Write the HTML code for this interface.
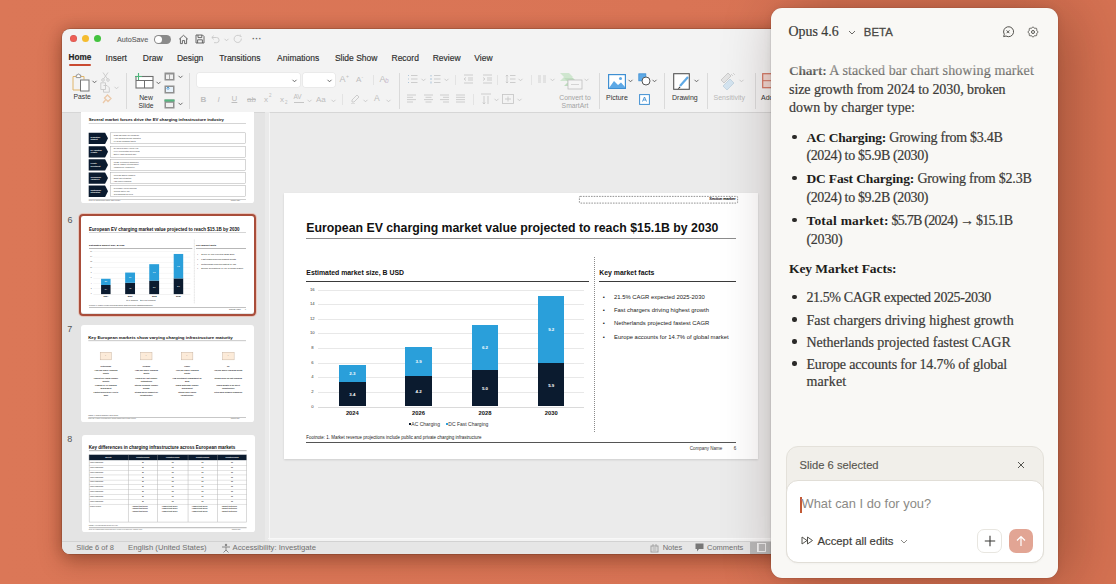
<!DOCTYPE html>
<html><head><meta charset="utf-8">
<style>
*{margin:0;padding:0;box-sizing:border-box}
html,body{width:1116px;height:584px;overflow:hidden}
body{background:#DA7556;font-family:"Liberation Sans",sans-serif;position:relative}
.a{position:absolute}
.t{position:absolute;white-space:nowrap;line-height:1}
#bg{position:absolute;left:0;top:0;width:1116px;height:584px;background:linear-gradient(90deg,#DB7757 0%,#D97455 60%,#D67252 100%)}
#win{position:absolute;left:62px;top:29px;width:760px;height:525px;background:#F3F3F3;border-radius:8px;overflow:hidden;box-shadow:0 8px 22px rgba(70,25,5,.34),0 0 14px rgba(70,25,5,.22),0 0 0 .5px rgba(0,0,0,.25)}
#panel{position:absolute;left:771px;top:7.5px;width:287px;height:570px;background:#F9F8F5;border-radius:11px;box-shadow:12px 4px 60px rgba(45,12,0,.32),0 0 8px rgba(0,0,0,.08),0 0 0 .5px rgba(0,0,0,.1);overflow:hidden}
.tab{position:absolute;top:25px;font-size:8.5px;color:#2E2E2E;-webkit-text-stroke:.15px #2E2E2E;white-space:nowrap;line-height:1}
.sep{position:absolute;width:1px;background:#DADADA}
.rl{position:absolute;font-size:7px;color:#333;white-space:nowrap;line-height:1;text-align:center}
svg{position:absolute;overflow:visible}
.g{stroke:#C6C6C6;fill:none;stroke-width:.85}
.d{stroke:#5A5A5A;fill:none;stroke-width:.9}
</style></head>
<body>
<div id="bg"></div>
<div id="win">
  <!-- ===== title bar ===== -->
  <div class="a" style="left:7.5px;top:6.3px;width:7px;height:7px;border-radius:50%;background:#EE5E55;box-shadow:inset 0 0 0 .4px rgba(0,0,0,.15)"></div>
  <div class="a" style="left:19.8px;top:6.3px;width:7px;height:7px;border-radius:50%;background:#F5BC2F"></div>
  <div class="a" style="left:32.1px;top:6.3px;width:7px;height:7px;border-radius:50%;background:#43C33F"></div>
  <div class="t" style="left:55px;top:7px;font-size:7.2px;color:#5E5E5E;-webkit-text-stroke:.1px #5E5E5E">AutoSave</div>
  <div class="a" style="left:92px;top:6px;width:17px;height:8.5px;border-radius:4.5px;background:#8A8A8A"></div>
  <div class="a" style="left:92.6px;top:6.6px;width:7.3px;height:7.3px;border-radius:50%;background:#fff"></div>
  <svg style="left:116px;top:4.5px" width="11" height="11" viewBox="0 0 11 11"><path class="d" d="M1.2 5.2 L5.5 1.3 L9.8 5.2 M2.4 4.3 V9.6 H4.4 V6.6 H6.6 V9.6 H8.6 V4.3"/></svg>
  <svg style="left:132.5px;top:5px" width="10" height="10" viewBox="0 0 10 10"><path class="d" d="M1 1 H7.5 L9 2.5 V9 H1 Z M3 1 V3.6 H6.8 V1 M2.6 9 V5.8 H7.4 V9"/></svg>
  <svg style="left:148px;top:5px" width="10" height="10" viewBox="0 0 10 10"><path class="g" d="M2 3.5 H6.5 A2.6 2.6 0 0 1 6.5 8.7 H4 M3.8 1.6 L1.8 3.5 L3.8 5.4"/></svg>
  <svg style="left:162px;top:8.5px" width="5" height="4" viewBox="0 0 5 4"><path class="g" d="M.5 .8 L2.5 2.8 L4.5 .8"/></svg>
  <svg style="left:171px;top:5px" width="10" height="10" viewBox="0 0 10 10"><path class="g" d="M8.3 4.5 A3.6 3.6 0 1 1 6.7 1.9 M7.2 .6 L7 2.2 L8.6 2.6"/></svg>
  <div class="t" style="left:190px;top:5.5px;font-size:9px;color:#666;letter-spacing:.3px;font-weight:bold">···</div>

  <!-- ===== tabs ===== -->
  <div class="tab" style="left:6.5px;font-weight:bold;color:#222;font-size:8.2px;top:25px">Home</div>
  <div class="a" style="left:6.5px;top:35px;width:22.5px;height:2px;background:#C94A31;border-radius:1px"></div>
  <div class="tab" style="left:43.6px">Insert</div>
  <div class="tab" style="left:80.8px">Draw</div>
  <div class="tab" style="left:114.9px">Design</div>
  <div class="tab" style="left:157.2px">Transitions</div>
  <div class="tab" style="left:215.1px">Animations</div>
  <div class="tab" style="left:272.9px">Slide Show</div>
  <div class="tab" style="left:329.5px">Record</div>
  <div class="tab" style="left:370.7px">Review</div>
  <div class="tab" style="left:412.3px">View</div>

  <!-- ===== ribbon ===== -->
  <div id="ribbon">
  <!-- paste -->
  <svg style="left:9.5px;top:43.5px" width="18" height="19" viewBox="0 0 18 19"><path d="M1 3.5 H4.5 M8.5 3.5 H12 V6.5" stroke="#E0B56A" fill="none" stroke-width="1"/><path d="M1 3.5 V17 H8.5" stroke="#E0B56A" fill="none" stroke-width="1"/><path d="M4.3 3.5 V2 H5.5 A1 1 0 0 1 7.5 2 H8.7 V4.6 H4.3 Z" stroke="#8A8A8A" fill="#fff" stroke-width=".9"/><rect x="8.5" y="7" width="8.5" height="11" stroke="#777" fill="#fff" stroke-width="1"/></svg>
  <svg style="left:30px;top:51px" width="5" height="4" viewBox="0 0 5 4"><path class="d" d="M.5 .8 L2.5 2.8 L4.5 .8"/></svg>
  <div class="rl" style="left:11.5px;top:65px;font-size:6.8px">Paste</div>
  <svg style="left:39px;top:43px" width="9" height="10" viewBox="0 0 9 10"><path class="g" d="M2 .5 L6.5 7 M7 .5 L2.5 7"/><circle class="g" cx="2" cy="8" r="1.3"/><circle class="g" cx="7" cy="8" r="1.3"/></svg>
  <svg style="left:37.5px;top:52.5px" width="11" height="11" viewBox="0 0 11 11"><path class="g" d="M.8 .8 H5.5 V7.5 H.8 Z M3.5 3.5 H7 L9.3 5.8 V10.2 H3.5 V7.5"/></svg>
  <svg style="left:51.5px;top:56.5px" width="5" height="4" viewBox="0 0 5 4"><path class="g" d="M.5 .8 L2.5 2.8 L4.5 .8"/></svg>
  <svg style="left:39.5px;top:65px" width="10" height="10" viewBox="0 0 10 10"><path d="M5.5 1 L9 4.5 L6 7.5 L2.5 4 Z M3.5 6 L1 9" stroke="#EBC9A9" fill="none" stroke-width="1.3"/></svg>
  <div class="sep" style="left:63.7px;top:44px;height:36px"></div>
  <!-- new slide -->
  <svg style="left:71.5px;top:44px" width="20" height="16" viewBox="0 0 20 16"><rect x="2" y="3.5" width="17" height="11.5" stroke="#6E6E6E" fill="#fff" stroke-width="1.1"/><path d="M2 7.5 H19 M10.5 7.5 V15" stroke="#6E6E6E" stroke-width="1"/><path d="M4.5 0 V7 M1 3.5 H8" stroke="#4DB57A" stroke-width="1.1"/></svg>
  <svg style="left:93.5px;top:51.5px" width="5" height="4" viewBox="0 0 5 4"><path class="d" d="M.5 .8 L2.5 2.8 L4.5 .8"/></svg>
  <div class="rl" style="left:76px;top:65px;width:16px;font-size:6.8px;line-height:7.5px">New<br>Slide</div>
  <svg style="left:101.5px;top:43px" width="11" height="9" viewBox="0 0 11 9"><rect x=".5" y=".5" width="10" height="8" fill="#909090"/><rect x="2" y="2.5" width="7" height="4.5" fill="#F0F0F0"/><path d="M5.5 2.5 V7" stroke="#909090" stroke-width=".8"/></svg>
  <svg style="left:115.5px;top:45.5px" width="5" height="4" viewBox="0 0 5 4"><path class="d" d="M.5 .8 L2.5 2.8 L4.5 .8"/></svg>
  <svg style="left:101.5px;top:56px" width="11" height="9" viewBox="0 0 11 9"><rect x=".5" y=".5" width="10" height="8" fill="#909090"/><rect x="2" y="2" width="7" height="5" fill="#E8F2FA"/><path d="M2.5 3.5 L4 2 L5.5 3.5 M4 2 V5" stroke="#3A8FD0" stroke-width=".8" fill="none"/></svg>
  <svg style="left:101.5px;top:69.5px" width="11" height="10" viewBox="0 0 11 10"><rect x=".5" y=".5" width="10" height="9" fill="#909090"/><rect x=".5" y=".5" width="10" height="2" fill="#54B67E"/><rect x="2" y="3.8" width="7" height="4.2" fill="#F0F0F0"/></svg>
  <svg style="left:115.5px;top:73px" width="5" height="4" viewBox="0 0 5 4"><path class="d" d="M.5 .8 L2.5 2.8 L4.5 .8"/></svg>
  <div class="sep" style="left:127.4px;top:44px;height:36px"></div>
  <!-- font -->
  <div class="a" style="left:135px;top:44px;width:103px;height:14px;background:#fff;border-radius:2px;box-shadow:0 0 0 .5px #E2E2E2"></div>
  <svg style="left:230px;top:49.5px" width="5" height="4" viewBox="0 0 5 4"><path class="d" d="M.5 .8 L2.5 2.8 L4.5 .8"/></svg>
  <div class="a" style="left:241px;top:44px;width:32px;height:14px;background:#fff;border-radius:2px;box-shadow:0 0 0 .5px #E2E2E2"></div>
  <svg style="left:265px;top:49.5px" width="5" height="4" viewBox="0 0 5 4"><path class="d" d="M.5 .8 L2.5 2.8 L4.5 .8"/></svg>
  <div class="t" style="left:277.5px;top:46px;font-size:9px;color:#BDBDBD">A</div><div class="t" style="left:284px;top:45px;font-size:5px;color:#BDBDBD">+</div>
  <div class="t" style="left:294px;top:47px;font-size:8px;color:#BDBDBD">A</div><div class="t" style="left:299.5px;top:45.5px;font-size:5px;color:#BDBDBD">-</div>
  <div class="sep" style="left:311px;top:46px;height:10px;background:#E3E3E3"></div>
  <div class="t" style="left:317.5px;top:46px;font-size:9px;color:#BDBDBD">A</div><div class="t" style="left:323px;top:49px;font-size:6.5px;color:#C9B9D0;font-style:italic">b</div>
  <!-- row2 font -->
  <div class="t" style="left:138.5px;top:66.5px;font-size:8px;color:#BDBDBD;font-weight:bold">B</div>
  <div class="t" style="left:155.5px;top:66.5px;font-size:8px;color:#BDBDBD;font-style:italic">I</div>
  <div class="t" style="left:169.5px;top:66px;font-size:8px;color:#BDBDBD;text-decoration:underline">U</div>
  <div class="t" style="left:185px;top:66.5px;font-size:8px;color:#BDBDBD;text-decoration:line-through">ab</div>
  <div class="t" style="left:202px;top:66.5px;font-size:8px;color:#BDBDBD">x</div><div class="t" style="left:207px;top:65px;font-size:4.5px;color:#BDBDBD">2</div>
  <div class="t" style="left:218px;top:66.5px;font-size:8px;color:#BDBDBD">x</div><div class="t" style="left:223px;top:71.5px;font-size:4.5px;color:#BDBDBD">2</div>
  <div class="t" style="left:231.5px;top:64.5px;font-size:6.5px;color:#BDBDBD">AV</div><div class="a" style="left:231.5px;top:72.5px;width:10px;height:.8px;background:#C5C5C5"></div>
  <svg style="left:245px;top:69.5px" width="5" height="4" viewBox="0 0 5 4"><path class="g" d="M.5 .8 L2.5 2.8 L4.5 .8"/></svg>
  <div class="t" style="left:254px;top:66.5px;font-size:8px;color:#BDBDBD">Aa</div>
  <svg style="left:268.5px;top:69.5px" width="5" height="4" viewBox="0 0 5 4"><path class="g" d="M.5 .8 L2.5 2.8 L4.5 .8"/></svg>
  <div class="sep" style="left:280px;top:65px;height:11px;background:#E3E3E3"></div>
  <svg style="left:288px;top:65px" width="10" height="10" viewBox="0 0 10 10"><path class="g" d="M7 1 L9 3 L4 8 L2 8 L2 6 Z"/><path d="M1 9.5 H5" stroke="#DDD" stroke-width="1"/></svg>
  <svg style="left:301px;top:69.5px" width="5" height="4" viewBox="0 0 5 4"><path class="g" d="M.5 .8 L2.5 2.8 L4.5 .8"/></svg>
  <div class="t" style="left:312px;top:65px;font-size:8.5px;color:#BDBDBD">A</div>
  <svg style="left:324px;top:69.5px" width="5" height="4" viewBox="0 0 5 4"><path class="g" d="M.5 .8 L2.5 2.8 L4.5 .8"/></svg>
  <div class="sep" style="left:337px;top:44px;height:36px"></div>
  <!-- paragraph -->
  <svg style="left:345px;top:45px" width="11" height="10" viewBox="0 0 11 10"><path class="g" d="M4 1.5 H10.5 M4 5 H10.5 M4 8.5 H10.5"/><path d="M1 1.5 H2 M1 5 H2 M1 8.5 H2" stroke="#AFC6DA" stroke-width="1.1"/></svg>
  <svg style="left:359px;top:49px" width="5" height="4" viewBox="0 0 5 4"><path class="g" d="M.5 .8 L2.5 2.8 L4.5 .8"/></svg>
  <svg style="left:368px;top:45px" width="11" height="10" viewBox="0 0 11 10"><path class="g" d="M4 1.5 H10.5 M4 5 H10.5 M4 8.5 H10.5"/><path d="M1 1 V2.5 M1 4 V6 M1 7.5 V9.5" stroke="#AFC6DA" stroke-width="1.1"/></svg>
  <svg style="left:382px;top:49px" width="5" height="4" viewBox="0 0 5 4"><path class="g" d="M.5 .8 L2.5 2.8 L4.5 .8"/></svg>
  <div class="sep" style="left:393.3px;top:46px;height:10px;background:#E3E3E3"></div>
  <svg style="left:400.5px;top:45px" width="11" height="10" viewBox="0 0 11 10"><path class="g" d="M1 1 H10 M5 4 H10 M5 6 H10 M1 9 H10 M3 3.5 L1 5 L3 6.5"/></svg>
  <svg style="left:419.5px;top:45px" width="11" height="10" viewBox="0 0 11 10"><path class="g" d="M1 1 H10 M5 4 H10 M5 6 H10 M1 9 H10 M1 3.5 L3 5 L1 6.5"/></svg>
  <div class="sep" style="left:434.5px;top:46px;height:10px;background:#E3E3E3"></div>
  <svg style="left:442.5px;top:45px" width="11" height="10" viewBox="0 0 11 10"><path class="g" d="M5 1.5 H10.5 M5 5 H10.5 M5 8.5 H10.5 M2 1 V9 M.8 2.2 L2 1 L3.2 2.2 M.8 7.8 L2 9 L3.2 7.8"/></svg>
  <svg style="left:456px;top:49px" width="5" height="4" viewBox="0 0 5 4"><path class="g" d="M.5 .8 L2.5 2.8 L4.5 .8"/></svg>
  <div class="sep" style="left:468.5px;top:46px;height:10px;background:#E3E3E3"></div>
  <svg style="left:475px;top:46px" width="10" height="8" viewBox="0 0 10 8"><path d="M1 1 H4 M1 3 H4 M1 5 H4 M1 7 H4 M6 1 H9 M6 3 H9 M6 5 H9 M6 7 H9" stroke="#CFCFCF" stroke-width=".9"/></svg>
  <svg style="left:488px;top:49px" width="5" height="4" viewBox="0 0 5 4"><path class="g" d="M.5 .8 L2.5 2.8 L4.5 .8"/></svg>
  <svg style="left:497px;top:43px" width="24" height="18" viewBox="0 0 24 18"><path d="M1 1 H10 L14 5 L10 9 H1 L5 5 Z" fill="#CFE6CF"/><path d="M5 6 H14 L18 10 L14 14 H5 L9 10 Z" fill="#BFDDBF"/><rect x="9" y="8" width="14" height="9" fill="#F5F5F5" stroke="#BDBDBD" stroke-width=".8"/><path d="M12 12.5 H20" stroke="#CCC" stroke-width=".8"/></svg>
  <svg style="left:521.5px;top:49px" width="5" height="4" viewBox="0 0 5 4"><path class="g" d="M.5 .8 L2.5 2.8 L4.5 .8"/></svg>
  <div class="rl" style="left:494px;top:65px;width:38px;font-size:6.8px;line-height:7.8px;color:#A3A3A3">Convert to<br>SmartArt</div>
  <!-- row2 para -->
  <svg style="left:344px;top:65px" width="11" height="9" viewBox="0 0 11 9"><path class="g" d="M1 1 H10 M1 3.3 H7 M1 5.6 H10 M1 8 H7"/></svg>
  <svg style="left:361px;top:65px" width="11" height="9" viewBox="0 0 11 9"><path class="g" d="M1 1 H10 M2.5 3.3 H8.5 M1 5.6 H10 M2.5 8 H8.5"/></svg>
  <svg style="left:377px;top:65px" width="11" height="9" viewBox="0 0 11 9"><path class="g" d="M1 1 H10 M4 3.3 H10 M1 5.6 H10 M4 8 H10"/></svg>
  <svg style="left:393px;top:65px" width="11" height="9" viewBox="0 0 11 9"><path class="g" d="M1 1 H10 M1 3.3 H10 M1 5.6 H10 M1 8 H10"/></svg>
  <div class="sep" style="left:411px;top:65px;height:11px;background:#E3E3E3"></div>
  <svg style="left:418px;top:64px" width="12" height="12" viewBox="0 0 12 12"><path class="g" d="M1 1 H11 M4 3 V11 M8 3 V11 M2.8 9.5 L4 11 L5.2 9.5"/></svg>
  <svg style="left:432px;top:69px" width="5" height="4" viewBox="0 0 5 4"><path class="g" d="M.5 .8 L2.5 2.8 L4.5 .8"/></svg>
  <svg style="left:440px;top:65px" width="12" height="10" viewBox="0 0 12 10"><rect class="g" x=".5" y=".5" width="11" height="9"/><path class="g" d="M3 5 H9 M6 2.5 V7.5"/></svg>
  <svg style="left:455px;top:69px" width="5" height="4" viewBox="0 0 5 4"><path class="g" d="M.5 .8 L2.5 2.8 L4.5 .8"/></svg>
  <div class="sep" style="left:536.6px;top:44px;height:36px"></div>
  <!-- picture / shapes -->
  <svg style="left:545.5px;top:44.5px" width="18" height="15" viewBox="0 0 18 15"><rect x=".6" y=".6" width="16.8" height="13.8" fill="#fff" stroke="#3F8FD2" stroke-width="1.2"/><path d="M1 14 L6 7 L10 11 L13 8.5 L17 13 V14 Z" fill="#5EA9E6"/><circle cx="12.5" cy="4.5" r="1.5" fill="#5EA9E6"/></svg>
  <svg style="left:566px;top:50px" width="5" height="4" viewBox="0 0 5 4"><path class="d" d="M.5 .8 L2.5 2.8 L4.5 .8"/></svg>
  <svg style="left:575.5px;top:44px" width="13" height="13" viewBox="0 0 13 13"><rect x=".8" y=".8" width="7" height="7" fill="#5EA9E6" stroke="#3F8FD2" stroke-width=".8"/><circle cx="8" cy="8" r="4" fill="#fff" stroke="#555" stroke-width="1"/></svg>
  <svg style="left:590px;top:50px" width="5" height="4" viewBox="0 0 5 4"><path class="d" d="M.5 .8 L2.5 2.8 L4.5 .8"/></svg>
  <div class="rl" style="left:544px;top:65px;font-size:7px;color:#333">Picture</div>
  <svg style="left:576.5px;top:64.5px" width="11" height="11" viewBox="0 0 11 11"><rect x=".6" y=".6" width="9.8" height="9.8" fill="#fff" stroke="#3F8FD2" stroke-width="1"/><path d="M3.5 7.5 L5.5 3 L7.5 7.5 M4.3 6 H6.7" stroke="#3F8FD2" stroke-width=".9" fill="none"/></svg>
  <div class="sep" style="left:602.2px;top:44px;height:36px"></div>
  <!-- drawing -->
  <svg style="left:611px;top:43.5px" width="18" height="18" viewBox="0 0 18 18"><rect x=".7" y=".7" width="15.6" height="15.6" fill="#fff" stroke="#555" stroke-width="1.1"/><path d="M15 4 L7 13" stroke="#5EA9E6" stroke-width="2.2"/><path d="M6.5 13.5 L4.5 16.5 L7.5 14.5 Z" fill="#333"/></svg>
  <svg style="left:632px;top:50px" width="5" height="4" viewBox="0 0 5 4"><path class="d" d="M.5 .8 L2.5 2.8 L4.5 .8"/></svg>
  <div class="rl" style="left:610px;top:65px;font-size:7px;color:#333">Drawing</div>
  <div class="sep" style="left:645px;top:44px;height:36px"></div>
  <!-- sensitivity -->
  <svg style="left:656.5px;top:43px" width="19" height="19" viewBox="0 0 19 19"><path d="M2 8 L9 1 L12 4 L5 11 Z" fill="#E4E4E4" stroke="#C4C4C4" stroke-width=".8"/><path d="M4 14 L11 7 L15 11 L8 18 Z" fill="#D4E4F0" stroke="#BFD0DD" stroke-width=".8"/><path d="M12 2 L14 4 M14 1 L16 3" stroke="#CCC" stroke-width=".8"/></svg>
  <svg style="left:677px;top:50px" width="5" height="4" viewBox="0 0 5 4"><path class="g" d="M.5 .8 L2.5 2.8 L4.5 .8"/></svg>
  <div class="rl" style="left:651.5px;top:65px;font-size:7px;color:#B9B9B9">Sensitivity</div>
  <div class="sep" style="left:692.5px;top:44px;height:36px"></div>
  <svg style="left:700px;top:44px" width="14" height="16" viewBox="0 0 14 16"><rect x=".7" y=".7" width="12" height="14" fill="#F3D9D3" stroke="#D2735F" stroke-width="1.2"/><path d="M.7 7.7 H12.7" stroke="#D2735F" stroke-width="1"/></svg>
  <div class="rl" style="left:699px;top:65px;font-size:7px;color:#333">Add-ins</div>
  </div>

  <!-- ===== slide panel ===== -->
  <div class="a" style="left:0;top:83px;width:206px;height:429px;background:#E4E4E4;border-top:.5px solid #D6D6D6"></div>
  <div class="a" style="left:203.2px;top:83px;width:4px;height:429px;background:#EAEAEA"></div>
  <!-- main area -->
  <div class="a" style="left:207.2px;top:83px;width:560px;height:426px;background:#EBEBEB;border-left:1px solid #F6F6F6;border-top:.5px solid #D6D6D6"></div>
  <div class="a" style="left:206px;top:508.5px;width:560px;height:1px;background:#F8F8F8"></div>
  <!-- status -->
  <div class="a" style="left:0;top:512px;width:760px;height:13px;background:#E6E6E6;border-top:.5px solid #D2D2D2"></div>
  <div class="t" style="left:14.3px;top:514.8px;font-size:7.5px;color:#707070">Slide 6 of 8</div>
  <div class="t" style="left:66px;top:514.8px;font-size:7.7px;color:#707070">English (United States)</div>
  <svg style="left:158.5px;top:513.5px" width="10" height="10" viewBox="0 0 10 10"><circle cx="5" cy="2" r="1.2" fill="#888"/><path d="M1 4 H9 M5 4 V7 L2.5 9.5 M5 7 L7.5 9.5" stroke="#888" stroke-width="1" fill="none"/></svg>
  <div class="t" style="left:170.6px;top:514.8px;font-size:7.7px;color:#707070">Accessibility: Investigate</div>
  <svg style="left:588px;top:513.5px" width="9" height="10" viewBox="0 0 9 10"><rect x="1" y="3" width="7" height="6" fill="none" stroke="#999" stroke-width=".9"/><path d="M2.5 5 H6.5 M2.5 7 H6.5 M3 1 V3.5 M6 1 V3.5" stroke="#999" stroke-width=".8"/></svg>
  <div class="t" style="left:600.7px;top:514.8px;font-size:7.5px;color:#707070">Notes</div>
  <svg style="left:633px;top:514px" width="9" height="9" viewBox="0 0 9 9"><path d="M.5 .5 H8.5 V6 H4 L2 8.5 V6 H.5 Z" fill="#777"/></svg>
  <div class="t" style="left:645px;top:514.8px;font-size:7.5px;color:#707070">Comments</div>
  <div class="a" style="left:688.3px;top:512.5px;width:30px;height:12.5px;background:#B8B8B8"></div>
  <svg style="left:695px;top:514px" width="9" height="9" viewBox="0 0 9 9"><rect x=".5" y=".5" width="8" height="8" fill="none" stroke="#F4F4F4" stroke-width=".9"/><path d="M1 .5 V8.5" stroke="#F4F4F4" stroke-width="1.5"/></svg>
</div>
<div class="a" style="left:62px;top:112px;width:206px;height:429px;overflow:hidden"><div class="a" style="left:18.799999999999997px;top:-6.5px;width:474px;height:266px;background:#fff;transform:scale(0.365);transform-origin:0 0;overflow:hidden;border-radius:8px"><div class="t" style="left:21px;top:31.6px;font-size:11.6px;font-weight:bold;color:#111">Several market forces drive the EV charging infrastructure industry</div><div class="a" style="left:21px;top:46.8px;width:431px;height:0.8px;background:#8C8C8C"></div><svg style="left:21px;top:73.3px" width="53" height="31" viewBox="0 0 53 31"><path d="M0 0 H45 L53 15.5 L45 31 H0 Z" fill="#0B1B2F"/></svg><div class="t" style="left:26px;top:82.8px;font-size:5.2px;color:#fff;font-weight:bold;line-height:6px">Regulatory<br>Support</div><div class="a" style="left:80.7px;top:73.3px;width:371px;height:31px;border:1.6px solid #8E8E8E;background:#fff"></div><div class="t" style="left:87px;top:78.3px;font-size:5px;color:#333">- 2035 ICE phase-out across EU</div><div class="t" style="left:87px;top:86.3px;font-size:5px;color:#333">- AFIR charging corridor mandates</div><div class="t" style="left:87px;top:94.3px;font-size:5px;color:#333">- Fit for 55 emissions targets</div><svg style="left:21px;top:109.5px" width="53" height="31" viewBox="0 0 53 31"><path d="M0 0 H45 L53 15.5 L45 31 H0 Z" fill="#0B1B2F"/></svg><div class="t" style="left:26px;top:119.0px;font-size:5.2px;color:#fff;font-weight:bold;line-height:6px">EV Adoption<br>Growth</div><div class="a" style="left:80.7px;top:109.5px;width:371px;height:31px;border:1.6px solid #8E8E8E;background:#fff"></div><div class="t" style="left:87px;top:114.5px;font-size:5px;color:#333">- EV sales up 35% year on year</div><div class="t" style="left:87px;top:122.5px;font-size:5px;color:#333">- Fleet electrification accelerating</div><div class="t" style="left:87px;top:130.5px;font-size:5px;color:#333">- Battery costs falling steadily</div><svg style="left:21px;top:145.7px" width="53" height="31" viewBox="0 0 53 31"><path d="M0 0 H45 L53 15.5 L45 31 H0 Z" fill="#0B1B2F"/></svg><div class="t" style="left:26px;top:155.2px;font-size:5.2px;color:#fff;font-weight:bold;line-height:6px">Private<br>Investment</div><div class="a" style="left:80.7px;top:145.7px;width:371px;height:31px;border:1.6px solid #8E8E8E;background:#fff"></div><div class="t" style="left:87px;top:150.7px;font-size:5px;color:#333">- €5.2B+ investment announced</div><div class="t" style="left:87px;top:158.7px;font-size:5px;color:#333">- Energy majors entering market</div><div class="t" style="left:87px;top:166.7px;font-size:5px;color:#333">- Infrastructure funds active</div><svg style="left:21px;top:181.9px" width="53" height="31" viewBox="0 0 53 31"><path d="M0 0 H45 L53 15.5 L45 31 H0 Z" fill="#0B1B2F"/></svg><div class="t" style="left:26px;top:191.4px;font-size:5.2px;color:#fff;font-weight:bold;line-height:6px">Technology<br>Advances</div><div class="a" style="left:80.7px;top:181.9px;width:371px;height:31px;border:1.6px solid #8E8E8E;background:#fff"></div><div class="t" style="left:87px;top:186.9px;font-size:5px;color:#333">- Ultra-fast 350kW chargers</div><div class="t" style="left:87px;top:194.9px;font-size:5px;color:#333">- Smart grid integration</div><div class="t" style="left:87px;top:202.9px;font-size:5px;color:#333">- V2G pilots expanding</div><svg style="left:21px;top:218.10000000000002px" width="53" height="31" viewBox="0 0 53 31"><path d="M0 0 H45 L53 15.5 L45 31 H0 Z" fill="#0B1B2F"/></svg><div class="t" style="left:26px;top:227.60000000000002px;font-size:5.2px;color:#fff;font-weight:bold;line-height:6px">Sustainable<br>Integration</div><div class="a" style="left:80.7px;top:218.10000000000002px;width:371px;height:31px;border:1.6px solid #8E8E8E;background:#fff"></div><div class="t" style="left:87px;top:223.10000000000002px;font-size:5px;color:#333">- Renewable energy sourcing</div><div class="t" style="left:87px;top:231.10000000000002px;font-size:5px;color:#333">- Circular battery use</div><div class="t" style="left:87px;top:239.10000000000002px;font-size:5px;color:#333">- Grid balancing services</div><div class="a" style="left:21px;top:255.5px;width:431px;height:0.7px;background:#777"></div><div class="t" style="left:21px;top:258px;font-size:3.5px;color:#555">Source: EV charging industry analysis; market research</div><div class="t" style="left:410px;top:258px;font-size:3.5px;color:#555">Company Name</div></div><div class="t" style="left:5.400000000000006px;top:103.9px;font-size:9px;color:#555">6</div><div class="a" style="left:19px;top:104.30000000000001px;width:474px;height:266px;background:#fff;transform:scale(0.365);transform-origin:0 0;overflow:hidden;border-radius:8px"><div class="t" style="left:22px;top:29.8px;font-size:12.3px;font-weight:bold;color:#111">European EV charging market value projected to reach $15.1B by 2030</div><div class="a" style="left:22px;top:45.2px;width:430px;height:0.7px;background:#8C8C8C"></div><div class="t" style="left:22px;top:77px;font-size:6.9px;font-weight:bold;color:#111">Estimated market size, B USD</div><div class="a" style="left:22px;top:88.5px;width:283px;height:1.1px;background:#3A3A3A"></div><div class="t" style="left:315px;top:77.5px;font-size:6.9px;font-weight:bold;color:#111">Key market facts</div><div class="a" style="left:315px;top:88.5px;width:137px;height:1.1px;background:#3A3A3A"></div><div class="a" style="left:309.6px;top:64px;width:0px;height:175px;border-left:.9px dotted #8A8A8A"></div><div class="a" style="left:34px;top:214.0px;width:266px;height:0.5px;background:#DADADA"></div><div class="t" style="left:20px;width:16px;text-align:center;top:212.0px;font-size:4.2px;color:#333">0</div><div class="a" style="left:34px;top:199.38px;width:266px;height:0.5px;background:#E8E8E8"></div><div class="t" style="left:20px;width:16px;text-align:center;top:197.38px;font-size:4.2px;color:#333">2</div><div class="a" style="left:34px;top:184.76px;width:266px;height:0.5px;background:#E8E8E8"></div><div class="t" style="left:20px;width:16px;text-align:center;top:182.76px;font-size:4.2px;color:#333">4</div><div class="a" style="left:34px;top:170.14px;width:266px;height:0.5px;background:#E8E8E8"></div><div class="t" style="left:20px;width:16px;text-align:center;top:168.14px;font-size:4.2px;color:#333">6</div><div class="a" style="left:34px;top:155.52px;width:266px;height:0.5px;background:#E8E8E8"></div><div class="t" style="left:20px;width:16px;text-align:center;top:153.52px;font-size:4.2px;color:#333">8</div><div class="a" style="left:34px;top:140.9px;width:266px;height:0.5px;background:#E8E8E8"></div><div class="t" style="left:20px;width:16px;text-align:center;top:138.9px;font-size:4.2px;color:#333">10</div><div class="a" style="left:34px;top:126.28px;width:266px;height:0.5px;background:#E8E8E8"></div><div class="t" style="left:20px;width:16px;text-align:center;top:124.28px;font-size:4.2px;color:#333">12</div><div class="a" style="left:34px;top:111.66px;width:266px;height:0.5px;background:#E8E8E8"></div><div class="t" style="left:20px;width:16px;text-align:center;top:109.66px;font-size:4.2px;color:#333">14</div><div class="a" style="left:34px;top:97.04px;width:266px;height:0.5px;background:#E8E8E8"></div><div class="t" style="left:20px;width:16px;text-align:center;top:95.04px;font-size:4.2px;color:#333">16</div><div class="a" style="left:54.8px;top:189.15px;width:26.5px;height:24.85px;background:#0B1B2F"></div><div class="a" style="left:54.8px;top:172.33px;width:26.5px;height:16.81px;background:#2A9FDA"></div><div class="t" style="left:54.8px;width:26.5px;text-align:center;top:200.27px;font-size:4.4px;font-weight:bold;color:#fff">3.4</div><div class="t" style="left:54.8px;width:26.5px;text-align:center;top:179.44px;font-size:4.4px;font-weight:bold;color:#fff">2.3</div><div class="t" style="left:49.8px;width:36.5px;text-align:center;top:218.3px;font-size:5.8px;font-weight:bold;color:#111">2024</div><div class="a" style="left:121px;top:183.3px;width:26.5px;height:30.7px;background:#0B1B2F"></div><div class="a" style="left:121px;top:154.79px;width:26.5px;height:28.51px;background:#2A9FDA"></div><div class="t" style="left:121px;width:26.5px;text-align:center;top:197.35px;font-size:4.4px;font-weight:bold;color:#fff">4.2</div><div class="t" style="left:121px;width:26.5px;text-align:center;top:167.74px;font-size:4.4px;font-weight:bold;color:#fff">3.9</div><div class="t" style="left:116px;width:36.5px;text-align:center;top:218.3px;font-size:5.8px;font-weight:bold;color:#111">2026</div><div class="a" style="left:187.4px;top:177.45px;width:26.5px;height:36.55px;background:#0B1B2F"></div><div class="a" style="left:187.4px;top:132.13px;width:26.5px;height:45.32px;background:#2A9FDA"></div><div class="t" style="left:187.4px;width:26.5px;text-align:center;top:194.42px;font-size:4.4px;font-weight:bold;color:#fff">5.0</div><div class="t" style="left:187.4px;width:26.5px;text-align:center;top:153.49px;font-size:4.4px;font-weight:bold;color:#fff">6.2</div><div class="t" style="left:182.4px;width:36.5px;text-align:center;top:218.3px;font-size:5.8px;font-weight:bold;color:#111">2028</div><div class="a" style="left:253.7px;top:170.87px;width:26.5px;height:43.13px;background:#0B1B2F"></div><div class="a" style="left:253.7px;top:103.62px;width:26.5px;height:67.25px;background:#2A9FDA"></div><div class="t" style="left:253.7px;width:26.5px;text-align:center;top:191.14px;font-size:4.4px;font-weight:bold;color:#fff">5.9</div><div class="t" style="left:253.7px;width:26.5px;text-align:center;top:135.94px;font-size:4.4px;font-weight:bold;color:#fff">9.2</div><div class="t" style="left:248.7px;width:36.5px;text-align:center;top:218.3px;font-size:5.8px;font-weight:bold;color:#111">2030</div><div class="a" style="left:124.5px;top:230.3px;width:2.2px;height:2.2px;background:#0B1B2F"></div><div class="t" style="left:127px;top:229.3px;font-size:5px;color:#333">AC Charging</div><div class="a" style="left:161.5px;top:230.3px;width:2.2px;height:2.2px;background:#2A9FDA"></div><div class="t" style="left:164px;top:229.3px;font-size:5px;color:#333">DC Fast Charging</div><div class="t" style="left:22px;top:243.3px;font-size:4.45px;color:#222">Footnote: 1. Market revenue projections include public and private charging infrastructure</div><div class="a" style="left:22px;top:249.7px;width:430px;height:0.7px;background:#555"></div><div class="t" style="left:405.5px;top:254px;font-size:4.5px;color:#333">Company Name</div><div class="t" style="left:449.5px;top:254px;font-size:4.5px;color:#333">6</div><div class="t" style="left:318.5px;top:102.3px;font-size:5.9px;color:#222">•</div><div class="t" style="left:329.7px;top:102.3px;font-size:5.9px;color:#222">21.5% CAGR expected 2025-2030</div><div class="t" style="left:318.5px;top:115.55px;font-size:5.9px;color:#222">•</div><div class="t" style="left:329.7px;top:115.55px;font-size:5.9px;color:#222">Fast chargers driving highest growth</div><div class="t" style="left:318.5px;top:128.8px;font-size:5.9px;color:#222">•</div><div class="t" style="left:329.7px;top:128.8px;font-size:5.9px;color:#222">Netherlands projected fastest CAGR</div><div class="t" style="left:318.5px;top:142.05px;font-size:5.9px;color:#222">•</div><div class="t" style="left:329.7px;top:142.05px;font-size:5.9px;color:#222">Europe accounts for 14.7% of global market</div></div><div class="a" style="left:16.7px;top:102.0px;width:177.6px;height:101.8px;border:2px solid #A94D3A;border-radius:4px;box-shadow:0 0 0 1px rgba(235,165,145,.5)"></div><div class="t" style="left:5.299999999999997px;top:213.3px;font-size:9px;color:#555">7</div><div class="a" style="left:19.299999999999997px;top:213.2px;width:474px;height:266px;background:#fff;transform:scale(0.365);transform-origin:0 0;overflow:hidden;border-radius:8px"><div class="t" style="left:19.6px;top:28.8px;font-size:12px;font-weight:bold;color:#111">Key European markets show varying charging infrastructure maturity</div><div class="a" style="left:19.6px;top:42.6px;width:432px;height:0.9px;background:#666"></div><div class="a" style="left:51.7px;top:74px;width:32.8px;height:21.5px;background:#FCEBD9;border:1.3px solid #B9A89A"></div><div class="t" style="left:66.6px;top:82px;font-size:5px;color:#555">•</div><div class="t" style="left:23.099999999999994px;width:90px;text-align:center;top:111.5px;font-size:5px;color:#222;font-weight:bold">Netherlands</div><div class="a" style="left:28.099999999999994px;width:80px;text-align:center;top:121px;font-size:5.3px;line-height:8px;color:#222;font-weight:bold">>100,000 public charging points</div><div class="a" style="left:28.099999999999994px;width:80px;text-align:center;top:141px;font-size:5.3px;line-height:8px;color:#222;font-weight:bold">Highest per capita charger density</div><div class="a" style="left:28.099999999999994px;width:80px;text-align:center;top:161px;font-size:5.3px;line-height:8px;color:#222;font-weight:bold">Leading in AC charging deployment</div><div class="a" style="left:28.099999999999994px;width:80px;text-align:center;top:181px;font-size:5.3px;line-height:8px;color:#222;font-weight:bold">Fastest projected CAGR to 2030</div><div class="a" style="left:162.6px;top:74px;width:32.8px;height:21.5px;background:#FCEBD9;border:1.3px solid #B9A89A"></div><div class="t" style="left:177.5px;top:82px;font-size:5px;color:#555">•</div><div class="t" style="left:134px;width:90px;text-align:center;top:111.5px;font-size:5px;color:#222;font-weight:bold">Germany</div><div class="a" style="left:139px;width:80px;text-align:center;top:121px;font-size:5.3px;line-height:8px;color:#222;font-weight:bold">>120,000 public charging points</div><div class="a" style="left:139px;width:80px;text-align:center;top:141px;font-size:5.3px;line-height:8px;color:#222;font-weight:bold">Highest DC fast charger installations</div><div class="a" style="left:139px;width:80px;text-align:center;top:161px;font-size:5.3px;line-height:8px;color:#222;font-weight:bold">Strong corporate charger growth</div><div class="a" style="left:139px;width:80px;text-align:center;top:181px;font-size:5.3px;line-height:8px;color:#222;font-weight:bold">Strong policy support for infrastructure</div><div class="a" style="left:274.4px;top:74px;width:32.8px;height:21.5px;background:#FCEBD9;border:1.3px solid #B9A89A"></div><div class="t" style="left:289.3px;top:82px;font-size:5px;color:#555">•</div><div class="t" style="left:245.8px;width:90px;text-align:center;top:111.5px;font-size:5px;color:#222;font-weight:bold">France</div><div class="a" style="left:250.8px;width:80px;text-align:center;top:121px;font-size:5.3px;line-height:8px;color:#222;font-weight:bold">>110,000 public charging points</div><div class="a" style="left:250.8px;width:80px;text-align:center;top:141px;font-size:5.3px;line-height:8px;color:#222;font-weight:bold">€1B investment commitment by 2030</div><div class="a" style="left:250.8px;width:80px;text-align:center;top:161px;font-size:5.3px;line-height:8px;color:#222;font-weight:bold">Rapid motorway charger deployment</div><div class="a" style="left:250.8px;width:80px;text-align:center;top:181px;font-size:5.3px;line-height:8px;color:#222;font-weight:bold">Strong Paris region infrastructure</div><div class="a" style="left:386.9px;top:74px;width:32.8px;height:21.5px;background:#FCEBD9;border:1.3px solid #B9A89A"></div><div class="t" style="left:401.8px;top:82px;font-size:5px;color:#555">•</div><div class="t" style="left:358.3px;width:90px;text-align:center;top:111.5px;font-size:5px;color:#222;font-weight:bold">UK</div><div class="a" style="left:363.3px;width:80px;text-align:center;top:121px;font-size:5.3px;line-height:8px;color:#222;font-weight:bold">>60,000 public charging points</div><div class="a" style="left:363.3px;width:80px;text-align:center;top:141px;font-size:5.3px;line-height:8px;color:#222;font-weight:bold">Strong focus on fast charging</div><div class="a" style="left:363.3px;width:80px;text-align:center;top:161px;font-size:5.3px;line-height:8px;color:#222;font-weight:bold">Rapid growth in on-street infrastructure</div><div class="a" style="left:363.3px;width:80px;text-align:center;top:181px;font-size:5.3px;line-height:8px;color:#222;font-weight:bold">Ultra rapid network expansion</div><div class="t" style="left:19.6px;top:247.5px;font-size:3.6px;color:#333">Footnote: 1. Charging infrastructure data as of 2024</div><div class="a" style="left:19.6px;top:252.5px;width:432px;height:0.8px;background:#666"></div><div class="t" style="left:19.6px;top:255.6px;font-size:3.4px;color:#555">Source: EU Alternative Fuels Observatory; national charging registries; market analysis</div><div class="t" style="left:410px;top:255.6px;font-size:3.4px;color:#555">Company Name</div></div><div class="t" style="left:5.299999999999997px;top:323.3px;font-size:9px;color:#555">8</div><div class="a" style="left:19.5px;top:322.9px;width:474px;height:266px;background:#fff;transform:scale(0.365);transform-origin:0 0;overflow:hidden;border-radius:8px"><div class="t" style="left:18.5px;top:28.3px;font-size:12.4px;font-weight:bold;color:#111">Key differences in charging infrastructure across European markets</div><div class="a" style="left:18.5px;top:43.3px;width:432.5px;height:0.9px;background:#333"></div><div class="a" style="left:18.5px;top:54.2px;width:432.5px;height:15.3px;background:#0B1B2F"></div><div class="t" style="left:18.5px;width:107.6px;text-align:center;top:59.5px;font-size:4.6px;color:#fff;font-weight:bold">Markets</div><div class="t" style="left:126.1px;width:81.20000000000002px;text-align:center;top:59.5px;font-size:4.6px;color:#fff;font-weight:bold">[Country/region]</div><div class="a" style="left:126.1px;top:54.2px;width:0.6px;height:184px;background:#9A9A9A"></div><div class="t" style="left:207.3px;width:82.30000000000001px;text-align:center;top:59.5px;font-size:4.6px;color:#fff;font-weight:bold">[Country/region]</div><div class="a" style="left:207.3px;top:54.2px;width:0.6px;height:184px;background:#9A9A9A"></div><div class="t" style="left:289.6px;width:81.19999999999999px;text-align:center;top:59.5px;font-size:4.6px;color:#fff;font-weight:bold">[Country/region]</div><div class="a" style="left:289.6px;top:54.2px;width:0.6px;height:184px;background:#9A9A9A"></div><div class="t" style="left:370.8px;width:80.19999999999999px;text-align:center;top:59.5px;font-size:4.6px;color:#fff;font-weight:bold">[Country/region]</div><div class="a" style="left:370.8px;top:54.2px;width:0.6px;height:184px;background:#9A9A9A"></div><div class="a" style="left:18.5px;top:82.8px;width:432.5px;height:0.6px;background:#B5B5B5"></div><div class="t" style="left:22px;top:73.8px;font-size:4.6px;color:#222">[Insert dimension]</div><div class="t" style="left:126.1px;width:81.20000000000002px;text-align:center;top:73.8px;font-size:4.6px;color:#222;font-weight:bold">xx</div><div class="t" style="left:207.3px;width:82.30000000000001px;text-align:center;top:73.8px;font-size:4.6px;color:#222;font-weight:bold">xx</div><div class="t" style="left:289.6px;width:81.19999999999999px;text-align:center;top:73.8px;font-size:4.6px;color:#222;font-weight:bold">xx</div><div class="t" style="left:370.8px;width:80.19999999999999px;text-align:center;top:73.8px;font-size:4.6px;color:#222;font-weight:bold">xx</div><div class="a" style="left:18.5px;top:96.1px;width:432.5px;height:0.6px;background:#B5B5B5"></div><div class="t" style="left:22px;top:87.1px;font-size:4.6px;color:#222">[Insert dimension]</div><div class="t" style="left:126.1px;width:81.20000000000002px;text-align:center;top:87.1px;font-size:4.6px;color:#222;font-weight:bold">xx</div><div class="t" style="left:207.3px;width:82.30000000000001px;text-align:center;top:87.1px;font-size:4.6px;color:#222;font-weight:bold">xx</div><div class="t" style="left:289.6px;width:81.19999999999999px;text-align:center;top:87.1px;font-size:4.6px;color:#222;font-weight:bold">xx</div><div class="t" style="left:370.8px;width:80.19999999999999px;text-align:center;top:87.1px;font-size:4.6px;color:#222;font-weight:bold">xx</div><div class="a" style="left:18.5px;top:109.4px;width:432.5px;height:0.6px;background:#B5B5B5"></div><div class="t" style="left:22px;top:100.4px;font-size:4.6px;color:#222">[Insert dimension]</div><div class="t" style="left:126.1px;width:81.20000000000002px;text-align:center;top:100.4px;font-size:4.6px;color:#222;font-weight:bold">xx</div><div class="t" style="left:207.3px;width:82.30000000000001px;text-align:center;top:100.4px;font-size:4.6px;color:#222;font-weight:bold">xx</div><div class="t" style="left:289.6px;width:81.19999999999999px;text-align:center;top:100.4px;font-size:4.6px;color:#222;font-weight:bold">xx</div><div class="t" style="left:370.8px;width:80.19999999999999px;text-align:center;top:100.4px;font-size:4.6px;color:#222;font-weight:bold">xx</div><div class="a" style="left:18.5px;top:122.7px;width:432.5px;height:0.6px;background:#B5B5B5"></div><div class="t" style="left:22px;top:113.7px;font-size:4.6px;color:#222">[Insert dimension]</div><div class="t" style="left:126.1px;width:81.20000000000002px;text-align:center;top:113.7px;font-size:4.6px;color:#222;font-weight:bold">xx</div><div class="t" style="left:207.3px;width:82.30000000000001px;text-align:center;top:113.7px;font-size:4.6px;color:#222;font-weight:bold">xx</div><div class="t" style="left:289.6px;width:81.19999999999999px;text-align:center;top:113.7px;font-size:4.6px;color:#222;font-weight:bold">xx</div><div class="t" style="left:370.8px;width:80.19999999999999px;text-align:center;top:113.7px;font-size:4.6px;color:#222;font-weight:bold">xx</div><div class="a" style="left:18.5px;top:136.0px;width:432.5px;height:0.6px;background:#B5B5B5"></div><div class="t" style="left:22px;top:127.0px;font-size:4.6px;color:#222">[Insert dimension]</div><div class="t" style="left:126.1px;width:81.20000000000002px;text-align:center;top:127.0px;font-size:4.6px;color:#222;font-weight:bold">xx</div><div class="t" style="left:207.3px;width:82.30000000000001px;text-align:center;top:127.0px;font-size:4.6px;color:#222;font-weight:bold">xx</div><div class="t" style="left:289.6px;width:81.19999999999999px;text-align:center;top:127.0px;font-size:4.6px;color:#222;font-weight:bold">xx</div><div class="t" style="left:370.8px;width:80.19999999999999px;text-align:center;top:127.0px;font-size:4.6px;color:#222;font-weight:bold">xx</div><div class="a" style="left:18.5px;top:149.3px;width:432.5px;height:0.6px;background:#B5B5B5"></div><div class="t" style="left:22px;top:140.3px;font-size:4.6px;color:#222">[Insert dimension]</div><div class="t" style="left:126.1px;width:81.20000000000002px;text-align:center;top:140.3px;font-size:4.6px;color:#222;font-weight:bold">xx</div><div class="t" style="left:207.3px;width:82.30000000000001px;text-align:center;top:140.3px;font-size:4.6px;color:#222;font-weight:bold">xx</div><div class="t" style="left:289.6px;width:81.19999999999999px;text-align:center;top:140.3px;font-size:4.6px;color:#222;font-weight:bold">xx</div><div class="t" style="left:370.8px;width:80.19999999999999px;text-align:center;top:140.3px;font-size:4.6px;color:#222;font-weight:bold">xx</div><div class="a" style="left:18.5px;top:162.6px;width:432.5px;height:0.6px;background:#B5B5B5"></div><div class="t" style="left:22px;top:153.6px;font-size:4.6px;color:#222">[Insert dimension]</div><div class="t" style="left:126.1px;width:81.20000000000002px;text-align:center;top:153.6px;font-size:4.6px;color:#222;font-weight:bold">xx</div><div class="t" style="left:207.3px;width:82.30000000000001px;text-align:center;top:153.6px;font-size:4.6px;color:#222;font-weight:bold">xx</div><div class="t" style="left:289.6px;width:81.19999999999999px;text-align:center;top:153.6px;font-size:4.6px;color:#222;font-weight:bold">xx</div><div class="t" style="left:370.8px;width:80.19999999999999px;text-align:center;top:153.6px;font-size:4.6px;color:#222;font-weight:bold">xx</div><div class="a" style="left:18.5px;top:175.9px;width:432.5px;height:0.6px;background:#B5B5B5"></div><div class="t" style="left:22px;top:166.9px;font-size:4.6px;color:#222">[Insert dimension]</div><div class="t" style="left:126.1px;width:81.20000000000002px;text-align:center;top:166.9px;font-size:4.6px;color:#222;font-weight:bold">xx</div><div class="t" style="left:207.3px;width:82.30000000000001px;text-align:center;top:166.9px;font-size:4.6px;color:#222;font-weight:bold">xx</div><div class="t" style="left:289.6px;width:81.19999999999999px;text-align:center;top:166.9px;font-size:4.6px;color:#222;font-weight:bold">xx</div><div class="t" style="left:370.8px;width:80.19999999999999px;text-align:center;top:166.9px;font-size:4.6px;color:#222;font-weight:bold">xx</div><div class="a" style="left:18.5px;top:189.2px;width:432.5px;height:0.6px;background:#B5B5B5"></div><div class="t" style="left:22px;top:180.2px;font-size:4.6px;color:#222">[Insert dimension]</div><div class="t" style="left:126.1px;width:81.20000000000002px;text-align:center;top:180.2px;font-size:4.6px;color:#222;font-weight:bold">xx</div><div class="t" style="left:207.3px;width:82.30000000000001px;text-align:center;top:180.2px;font-size:4.6px;color:#222;font-weight:bold">xx</div><div class="t" style="left:289.6px;width:81.19999999999999px;text-align:center;top:180.2px;font-size:4.6px;color:#222;font-weight:bold">xx</div><div class="t" style="left:370.8px;width:80.19999999999999px;text-align:center;top:180.2px;font-size:4.6px;color:#222;font-weight:bold">xx</div><div class="a" style="left:18.5px;top:54.2px;width:0.6px;height:184px;background:#9A9A9A"></div><div class="a" style="left:450.5px;top:54.2px;width:0.6px;height:184px;background:#9A9A9A"></div><div class="a" style="left:18.5px;top:238px;width:432.5px;height:0.6px;background:#9A9A9A"></div><div class="t" style="left:22px;top:194px;font-size:4.6px;color:#222">Market outlook</div><div class="t" style="left:136.1px;top:192.5px;font-size:5.2px;color:#222;font-weight:bold">- [Insert text here]</div><div class="t" style="left:136.1px;top:199.0px;font-size:5.2px;color:#222;font-weight:bold">- [Insert text here]</div><div class="t" style="left:136.1px;top:205.5px;font-size:5.2px;color:#222;font-weight:bold">- [Insert text here]</div><div class="t" style="left:217.3px;top:192.5px;font-size:5.2px;color:#222;font-weight:bold">- [Insert text here]</div><div class="t" style="left:217.3px;top:199.0px;font-size:5.2px;color:#222;font-weight:bold">- [Insert text here]</div><div class="t" style="left:217.3px;top:205.5px;font-size:5.2px;color:#222;font-weight:bold">- [Insert text here]</div><div class="t" style="left:299.6px;top:192.5px;font-size:5.2px;color:#222;font-weight:bold">- [Insert text here]</div><div class="t" style="left:299.6px;top:199.0px;font-size:5.2px;color:#222;font-weight:bold">- [Insert text here]</div><div class="t" style="left:299.6px;top:205.5px;font-size:5.2px;color:#222;font-weight:bold">- [Insert text here]</div><div class="t" style="left:380.8px;top:192.5px;font-size:5.2px;color:#222;font-weight:bold">- [Insert text here]</div><div class="t" style="left:380.8px;top:199.0px;font-size:5.2px;color:#222;font-weight:bold">- [Insert text here]</div><div class="t" style="left:380.8px;top:205.5px;font-size:5.2px;color:#222;font-weight:bold">- [Insert text here]</div><div class="t" style="left:18.5px;top:247.5px;font-size:3.6px;color:#333">Footnote: 1. Text as PIOLINT: add note here if any</div><div class="a" style="left:18.5px;top:253.8px;width:432.5px;height:0.8px;background:#333"></div><div class="t" style="left:18.5px;top:256.5px;font-size:3.4px;color:#555">Source: EV charging industry analysis; European Alternative Fuels Observatory; company reports</div><div class="t" style="left:410px;top:256.5px;font-size:3.4px;color:#555">Company Name</div></div></div><div class="a" style="left:284.3px;top:192.5px;width:474px;height:266px;background:#fff;box-shadow:0 .5px 2px rgba(0,0,0,.12)"><svg style="left:295px;top:3px" width="159" height="7.5" viewBox="0 0 159 7.5"><rect x=".4" y=".4" width="158.2" height="6.7" rx=".8" fill="none" stroke="#666" stroke-width=".7" stroke-dasharray="1.6 1.1"/></svg><div class="t" style="left:425px;top:4.2px;font-size:3.9px;color:#111;-webkit-text-stroke:.15px #111">Section marker</div><div class="t" style="left:22px;top:29.8px;font-size:12.3px;font-weight:bold;color:#111">European EV charging market value projected to reach $15.1B by 2030</div><div class="a" style="left:22px;top:45.2px;width:430px;height:0.7px;background:#8C8C8C"></div><div class="t" style="left:22px;top:77px;font-size:6.9px;font-weight:bold;color:#111">Estimated market size, B USD</div><div class="a" style="left:22px;top:88.5px;width:283px;height:1.1px;background:#3A3A3A"></div><div class="t" style="left:315px;top:77.5px;font-size:6.9px;font-weight:bold;color:#111">Key market facts</div><div class="a" style="left:315px;top:88.5px;width:137px;height:1.1px;background:#3A3A3A"></div><div class="a" style="left:309.6px;top:64px;width:0px;height:175px;border-left:.9px dotted #8A8A8A"></div><div class="a" style="left:34px;top:214.0px;width:266px;height:0.5px;background:#DADADA"></div><div class="t" style="left:20px;width:16px;text-align:center;top:212.0px;font-size:4.2px;color:#333">0</div><div class="a" style="left:34px;top:199.38px;width:266px;height:0.5px;background:#E8E8E8"></div><div class="t" style="left:20px;width:16px;text-align:center;top:197.38px;font-size:4.2px;color:#333">2</div><div class="a" style="left:34px;top:184.76px;width:266px;height:0.5px;background:#E8E8E8"></div><div class="t" style="left:20px;width:16px;text-align:center;top:182.76px;font-size:4.2px;color:#333">4</div><div class="a" style="left:34px;top:170.14px;width:266px;height:0.5px;background:#E8E8E8"></div><div class="t" style="left:20px;width:16px;text-align:center;top:168.14px;font-size:4.2px;color:#333">6</div><div class="a" style="left:34px;top:155.52px;width:266px;height:0.5px;background:#E8E8E8"></div><div class="t" style="left:20px;width:16px;text-align:center;top:153.52px;font-size:4.2px;color:#333">8</div><div class="a" style="left:34px;top:140.9px;width:266px;height:0.5px;background:#E8E8E8"></div><div class="t" style="left:20px;width:16px;text-align:center;top:138.9px;font-size:4.2px;color:#333">10</div><div class="a" style="left:34px;top:126.28px;width:266px;height:0.5px;background:#E8E8E8"></div><div class="t" style="left:20px;width:16px;text-align:center;top:124.28px;font-size:4.2px;color:#333">12</div><div class="a" style="left:34px;top:111.66px;width:266px;height:0.5px;background:#E8E8E8"></div><div class="t" style="left:20px;width:16px;text-align:center;top:109.66px;font-size:4.2px;color:#333">14</div><div class="a" style="left:34px;top:97.04px;width:266px;height:0.5px;background:#E8E8E8"></div><div class="t" style="left:20px;width:16px;text-align:center;top:95.04px;font-size:4.2px;color:#333">16</div><div class="a" style="left:54.8px;top:189.15px;width:26.5px;height:24.85px;background:#0B1B2F"></div><div class="a" style="left:54.8px;top:172.33px;width:26.5px;height:16.81px;background:#2A9FDA"></div><div class="t" style="left:54.8px;width:26.5px;text-align:center;top:200.27px;font-size:4.4px;font-weight:bold;color:#fff">3.4</div><div class="t" style="left:54.8px;width:26.5px;text-align:center;top:179.44px;font-size:4.4px;font-weight:bold;color:#fff">2.3</div><div class="t" style="left:49.8px;width:36.5px;text-align:center;top:218.3px;font-size:5.8px;font-weight:bold;color:#111">2024</div><div class="a" style="left:121px;top:183.3px;width:26.5px;height:30.7px;background:#0B1B2F"></div><div class="a" style="left:121px;top:154.79px;width:26.5px;height:28.51px;background:#2A9FDA"></div><div class="t" style="left:121px;width:26.5px;text-align:center;top:197.35px;font-size:4.4px;font-weight:bold;color:#fff">4.2</div><div class="t" style="left:121px;width:26.5px;text-align:center;top:167.74px;font-size:4.4px;font-weight:bold;color:#fff">3.9</div><div class="t" style="left:116px;width:36.5px;text-align:center;top:218.3px;font-size:5.8px;font-weight:bold;color:#111">2026</div><div class="a" style="left:187.4px;top:177.45px;width:26.5px;height:36.55px;background:#0B1B2F"></div><div class="a" style="left:187.4px;top:132.13px;width:26.5px;height:45.32px;background:#2A9FDA"></div><div class="t" style="left:187.4px;width:26.5px;text-align:center;top:194.42px;font-size:4.4px;font-weight:bold;color:#fff">5.0</div><div class="t" style="left:187.4px;width:26.5px;text-align:center;top:153.49px;font-size:4.4px;font-weight:bold;color:#fff">6.2</div><div class="t" style="left:182.4px;width:36.5px;text-align:center;top:218.3px;font-size:5.8px;font-weight:bold;color:#111">2028</div><div class="a" style="left:253.7px;top:170.87px;width:26.5px;height:43.13px;background:#0B1B2F"></div><div class="a" style="left:253.7px;top:103.62px;width:26.5px;height:67.25px;background:#2A9FDA"></div><div class="t" style="left:253.7px;width:26.5px;text-align:center;top:191.14px;font-size:4.4px;font-weight:bold;color:#fff">5.9</div><div class="t" style="left:253.7px;width:26.5px;text-align:center;top:135.94px;font-size:4.4px;font-weight:bold;color:#fff">9.2</div><div class="t" style="left:248.7px;width:36.5px;text-align:center;top:218.3px;font-size:5.8px;font-weight:bold;color:#111">2030</div><div class="a" style="left:124.5px;top:230.3px;width:2.2px;height:2.2px;background:#0B1B2F"></div><div class="t" style="left:127px;top:229.3px;font-size:5px;color:#333">AC Charging</div><div class="a" style="left:161.5px;top:230.3px;width:2.2px;height:2.2px;background:#2A9FDA"></div><div class="t" style="left:164px;top:229.3px;font-size:5px;color:#333">DC Fast Charging</div><div class="t" style="left:22px;top:243.3px;font-size:4.45px;color:#222">Footnote: 1. Market revenue projections include public and private charging infrastructure</div><div class="a" style="left:22px;top:249.7px;width:430px;height:0.7px;background:#555"></div><div class="t" style="left:405.5px;top:254px;font-size:4.5px;color:#333">Company Name</div><div class="t" style="left:449.5px;top:254px;font-size:4.5px;color:#333">6</div><div class="t" style="left:318.5px;top:102.3px;font-size:5.9px;color:#222">•</div><div class="t" style="left:329.7px;top:102.3px;font-size:5.9px;color:#222">21.5% CAGR expected 2025-2030</div><div class="t" style="left:318.5px;top:115.55px;font-size:5.9px;color:#222">•</div><div class="t" style="left:329.7px;top:115.55px;font-size:5.9px;color:#222">Fast chargers driving highest growth</div><div class="t" style="left:318.5px;top:128.8px;font-size:5.9px;color:#222">•</div><div class="t" style="left:329.7px;top:128.8px;font-size:5.9px;color:#222">Netherlands projected fastest CAGR</div><div class="t" style="left:318.5px;top:142.05px;font-size:5.9px;color:#222">•</div><div class="t" style="left:329.7px;top:142.05px;font-size:5.9px;color:#222">Europe accounts for 14.7% of global market</div></div><style>
.pt{position:absolute;white-space:nowrap;line-height:1;font-family:"Liberation Serif",serif;font-size:14px;color:#3B3A37;-webkit-text-stroke:.2px #3B3A37}
.pt b{color:#1E1D1B;font-size:13.5px;-webkit-text-stroke:0}
.bul{position:absolute;width:4.4px;height:4.4px;border-radius:50%;background:#2B2A28;margin:-.2px 0 0 -.2px}
</style>
<div id="panel">
  <div class="pt" style="left:17.5px;top:17.1px;font-size:13.9px;color:#3B3A37">Opus 4.6</div>
  <svg style="left:77px;top:22px" width="8" height="5" viewBox="0 0 8 5"><path d="M1 1 L4 4 L7 1" stroke="#6B6A66" stroke-width="1" fill="none"/></svg>
  <div class="t" style="left:92.8px;top:19.5px;font-size:11.3px;color:#4A4945;letter-spacing:.1px;-webkit-text-stroke:.3px #4A4945">BETA</div>
  <svg style="left:230.8px;top:18.8px" width="12" height="12" viewBox="0 0 12 12"><path d="M1.6 10.6 L2.3 8.3 A5 5 0 1 1 4 10 Z" stroke="#55544F" stroke-width="1" fill="none" stroke-linejoin="round"/><path d="M4.6 4.4 L7.4 7.2 M7.4 4.4 L4.6 7.2" stroke="#55544F" stroke-width="1"/></svg>
  <svg style="left:256.3px;top:18.8px" width="12" height="12" viewBox="0 0 12 12"><path d="M11.00 6.00 L10.92 6.32 L10.71 6.62 L10.41 6.88 L10.11 7.10 L9.85 7.31 L9.70 7.53 L9.65 7.80 L9.68 8.12 L9.74 8.50 L9.77 8.89 L9.71 9.25 L9.54 9.54 L9.25 9.71 L8.89 9.77 L8.50 9.74 L8.12 9.68 L7.80 9.65 L7.53 9.70 L7.31 9.85 L7.10 10.11 L6.88 10.41 L6.62 10.71 L6.32 10.92 L6.00 11.00 L5.68 10.92 L5.38 10.71 L5.12 10.41 L4.90 10.11 L4.69 9.85 L4.47 9.70 L4.20 9.65 L3.88 9.68 L3.50 9.74 L3.11 9.77 L2.75 9.71 L2.46 9.54 L2.29 9.25 L2.23 8.89 L2.26 8.50 L2.32 8.12 L2.35 7.80 L2.30 7.53 L2.15 7.31 L1.89 7.10 L1.59 6.88 L1.29 6.62 L1.08 6.32 L1.00 6.00 L1.08 5.68 L1.29 5.38 L1.59 5.12 L1.89 4.90 L2.15 4.69 L2.30 4.47 L2.35 4.20 L2.32 3.88 L2.26 3.50 L2.23 3.11 L2.29 2.75 L2.46 2.46 L2.75 2.29 L3.11 2.23 L3.50 2.26 L3.87 2.32 L4.20 2.35 L4.47 2.30 L4.69 2.15 L4.90 1.89 L5.12 1.59 L5.38 1.29 L5.68 1.08 L6.00 1.00 L6.32 1.08 L6.62 1.29 L6.88 1.59 L7.10 1.89 L7.31 2.15 L7.53 2.30 L7.80 2.35 L8.12 2.32 L8.50 2.26 L8.89 2.23 L9.25 2.29 L9.54 2.46 L9.71 2.75 L9.77 3.11 L9.74 3.50 L9.68 3.87 L9.65 4.20 L9.70 4.47 L9.85 4.69 L10.11 4.90 L10.41 5.12 L10.71 5.38 L10.92 5.68 L11.00 6.00 Z" stroke="#55544F" stroke-width="1" fill="none" stroke-linejoin="round"/><circle cx="6" cy="6" r="1.5" stroke="#55544F" stroke-width="1" fill="none"/></svg>

  <div class="pt" style="left:18px;top:56.8px"><b class="bb" style="letter-spacing:-0.250px">Chart:</b><span class="rr" style="letter-spacing:0.105px"> A stacked bar chart showing market</span></div>
  <div class="pt" style="left:18px;top:75.4px"><span class="rr" style="letter-spacing:-0.065px">size growth from 2024 to 2030, broken</span></div>
  <div class="pt" style="left:18px;top:93.3px"><span class="rr" style="letter-spacing:0.032px">down by charger type:</span></div>

  <div class="bul" style="left:21.5px;top:127.5px"></div>
  <div class="pt" style="left:35.4px;top:123.8px"><b class="bb" style="letter-spacing:-0.203px">AC Charging:</b><span class="rr" style="letter-spacing:-0.254px"> Growing from $3.4B</span></div>
  <div class="pt" style="left:35.4px;top:141.4px"><span class="rr" style="letter-spacing:-0.372px">(2024) to $5.9B (2030)</span></div>
  <div class="bul" style="left:21.5px;top:168.5px"></div>
  <div class="pt" style="left:35.4px;top:164.8px"><b class="bb" style="letter-spacing:-0.150px">DC Fast Charging:</b><span class="rr" style="letter-spacing:-0.201px"> Growing from $2.3B</span></div>
  <div class="pt" style="left:35.4px;top:183.9px"><span class="rr" style="letter-spacing:-0.372px">(2024) to $9.2B (2030)</span></div>
  <div class="bul" style="left:21.5px;top:210.2px"></div>
  <div class="pt" style="left:35.4px;top:206.5px"><b class="bb" style="letter-spacing:0.225px">Total market:</b><span class="rr" style="letter-spacing:-0.745px"> $5.7B (2024) → $15.1B</span></div>
  <div class="pt" style="left:35.4px;top:225.0px"><span class="rr" style="letter-spacing:-0.220px">(2030)</span></div>

  <div class="pt" style="left:18px;top:254.8px"><b class="bb" style="letter-spacing:-0.072px">Key Market Facts:</b><span class="rr" style="letter-spacing:0.000px"></span></div>

  <div class="bul" style="left:21.5px;top:287.6px"></div>
  <div class="pt" style="left:35.4px;top:283.9px"><span class="rr" style="letter-spacing:-0.395px">21.5% CAGR expected 2025-2030</span></div>
  <div class="bul" style="left:21.5px;top:309.8px"></div>
  <div class="pt" style="left:35.4px;top:306.1px"><span class="rr" style="letter-spacing:0.063px">Fast chargers driving highest growth</span></div>
  <div class="bul" style="left:21.5px;top:331.9px"></div>
  <div class="pt" style="left:35.4px;top:328.2px"><span class="rr" style="letter-spacing:-0.017px">Netherlands projected fastest CAGR</span></div>
  <div class="bul" style="left:21.5px;top:354.0px"></div>
  <div class="pt" style="left:35.4px;top:350.3px"><span class="rr" style="letter-spacing:-0.156px">Europe accounts for 14.7% of global</span></div>
  <div class="pt" style="left:35.4px;top:367.8px"><span class="rr" style="letter-spacing:0.189px">market</span></div>

  <div class="a" style="left:0;top:44px;width:287px;height:30px;background:linear-gradient(180deg,rgba(249,248,245,.75) 0%,rgba(249,248,245,.55) 45%,rgba(249,248,245,0) 100%)"></div>

  <!-- input -->
  <div class="a" style="left:14.8px;top:438.9px;width:258px;height:116.6px;background:#F1EFEA;border:1px solid #E4E1DA;border-radius:12px"></div>
  <div class="t" style="left:28.6px;top:452px;font-size:11.2px;color:#57564F;-webkit-text-stroke:.12px #57564F">Slide 6 selected</div>
  <svg style="left:246px;top:453.5px" width="8" height="8" viewBox="0 0 8 8"><path d="M1 1 L7 7 M7 1 L1 7" stroke="#55544F" stroke-width="1"/></svg>
  <div class="a" style="left:14.8px;top:472.3px;width:258px;height:83.2px;background:#FFFFFF;border:1px solid #E1DED7;border-radius:12px;box-shadow:0 1px 2px rgba(0,0,0,.03)"></div>
  <div class="a" style="left:28.6px;top:489.3px;width:2px;height:16px;background:#C25A35"></div>
  <div class="t" style="left:30.5px;top:490.8px;font-size:12.9px;color:#8B8A86">What can I do for you?</div>
  <svg style="left:29.5px;top:528.8px" width="13" height="9" viewBox="0 0 13 9"><path d="M1 1 L6 4.5 L1 8 Z M6.5 1 L11.5 4.5 L6.5 8 Z" stroke="#55544F" stroke-width="1" fill="none" stroke-linejoin="round"/></svg>
  <div class="t" style="left:46.5px;top:528.2px;font-size:11.3px;color:#3E3D39;-webkit-text-stroke:.18px #3E3D39">Accept all edits</div>
  <svg style="left:128.5px;top:531.5px" width="8" height="5" viewBox="0 0 8 5"><path d="M1 1 L4 4 L7 1" stroke="#8B8A86" stroke-width="1" fill="none"/></svg>
  <div class="a" style="left:206px;top:521.5px;width:24.5px;height:24px;background:#fff;border:1px solid #E8E6E0;border-radius:7px"></div>
  <svg style="left:212.5px;top:527.8px" width="12" height="12" viewBox="0 0 12 12"><path d="M6 .8 V11.2 M.8 6 H11.2" stroke="#3B3A37" stroke-width="1.1"/></svg>
  <div class="a" style="left:237.6px;top:521.5px;width:24.3px;height:24px;background:#E2A594;border-radius:7px"></div>
  <svg style="left:244px;top:527.5px" width="12" height="12" viewBox="0 0 12 12"><path d="M6 11 V1.5 M2 5.5 L6 1.5 L10 5.5" stroke="#fff" stroke-width="1.2" fill="none"/></svg>
</div>
</body></html>
